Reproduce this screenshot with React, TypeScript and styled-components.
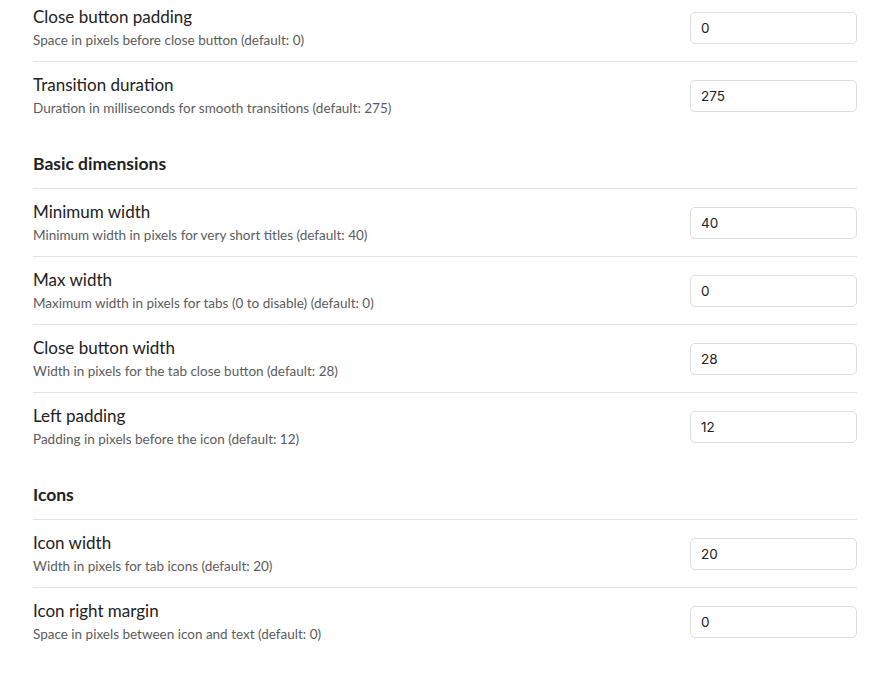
import React, { useState } from 'react';
import styled, { createGlobalStyle } from 'styled-components';

const GlobalStyle = createGlobalStyle`
	html, body {
		margin: 0;
		padding: 0;
		background: #ffffff;
	}
	body {
		font-family: Lato, 'Noto Sans', sans-serif;
		color: #222222;
		overflow: hidden;
	}
`;

export const Page = styled.div`
	margin-top: -6px;
	padding: 0 15px 40px 33px;
`;

export const Heading = styled.div`
	padding: 23px 0 12px;
	border-bottom: 1px solid #e3e3e3;
	font-size: 17.5px;
	line-height: 24px;
	font-weight: 700;
	color: #222222;
`;

export const Row = styled.div`
	display: flex;
	align-items: center;
	justify-content: space-between;
	gap: 16px;
	padding: 11px 0;
	& + & {
		border-top: 1px solid #e3e3e3;
	}
`;

export const Info = styled.div`
	display: flex;
	flex-direction: column;
	gap: 2px;
`;

export const Name = styled.div`
	font-size: 17px;
	line-height: 24px;
	color: #222222;
`;

export const Desc = styled.div`
	font-size: 13.5px;
	line-height: 19px;
	color: #5c5c5c;
`;

export const Input = styled.input`
	box-sizing: border-box;
	width: 167px;
	height: 32px;
	padding: 0 10px;
	border: 1px solid #dedede;
	border-radius: 5px;
	background: #ffffff;
	font-family: Inter, Roboto, sans-serif;
	font-size: 13.5px;
	color: #222222;
	outline: none;
`;

type Setting = { name: string; desc: string; value: string };

const sections: { title?: string; items: Setting[] }[] = [
	{
		items: [
			{ name: 'Close button padding', desc: 'Space in pixels before close button (default: 0)', value: '0' },
			{ name: 'Transition duration', desc: 'Duration in milliseconds for smooth transitions (default: 275)', value: '275' },
		],
	},
	{
		title: 'Basic dimensions',
		items: [
			{ name: 'Minimum width', desc: 'Minimum width in pixels for very short titles (default: 40)', value: '40' },
			{ name: 'Max width', desc: 'Maximum width in pixels for tabs (0 to disable) (default: 0)', value: '0' },
			{ name: 'Close button width', desc: 'Width in pixels for the tab close button (default: 28)', value: '28' },
			{ name: 'Left padding', desc: 'Padding in pixels before the icon (default: 12)', value: '12' },
		],
	},
	{
		title: 'Icons',
		items: [
			{ name: 'Icon width', desc: 'Width in pixels for tab icons (default: 20)', value: '20' },
			{ name: 'Icon right margin', desc: 'Space in pixels between icon and text (default: 0)', value: '0' },
		],
	},
];

const SettingRow = ({ item }: { item: Setting }) => {
	const [value, setValue] = useState(item.value);
	return (
		<Row>
			<Info>
				<Name>{item.name}</Name>
				<Desc>{item.desc}</Desc>
			</Info>
			<Input type="text" value={value} onChange={(e) => setValue(e.target.value)} />
		</Row>
	);
};

const App = () => {
	return (
		<>
			<GlobalStyle />
			<Page>
				{sections.map((section, i) => (
					<div key={i}>
						{section.title && <Heading>{section.title}</Heading>}
						{section.items.map((item) => (
							<SettingRow key={item.name} item={item} />
						))}
					</div>
				))}
			</Page>
		</>
	);
};

export default App;
